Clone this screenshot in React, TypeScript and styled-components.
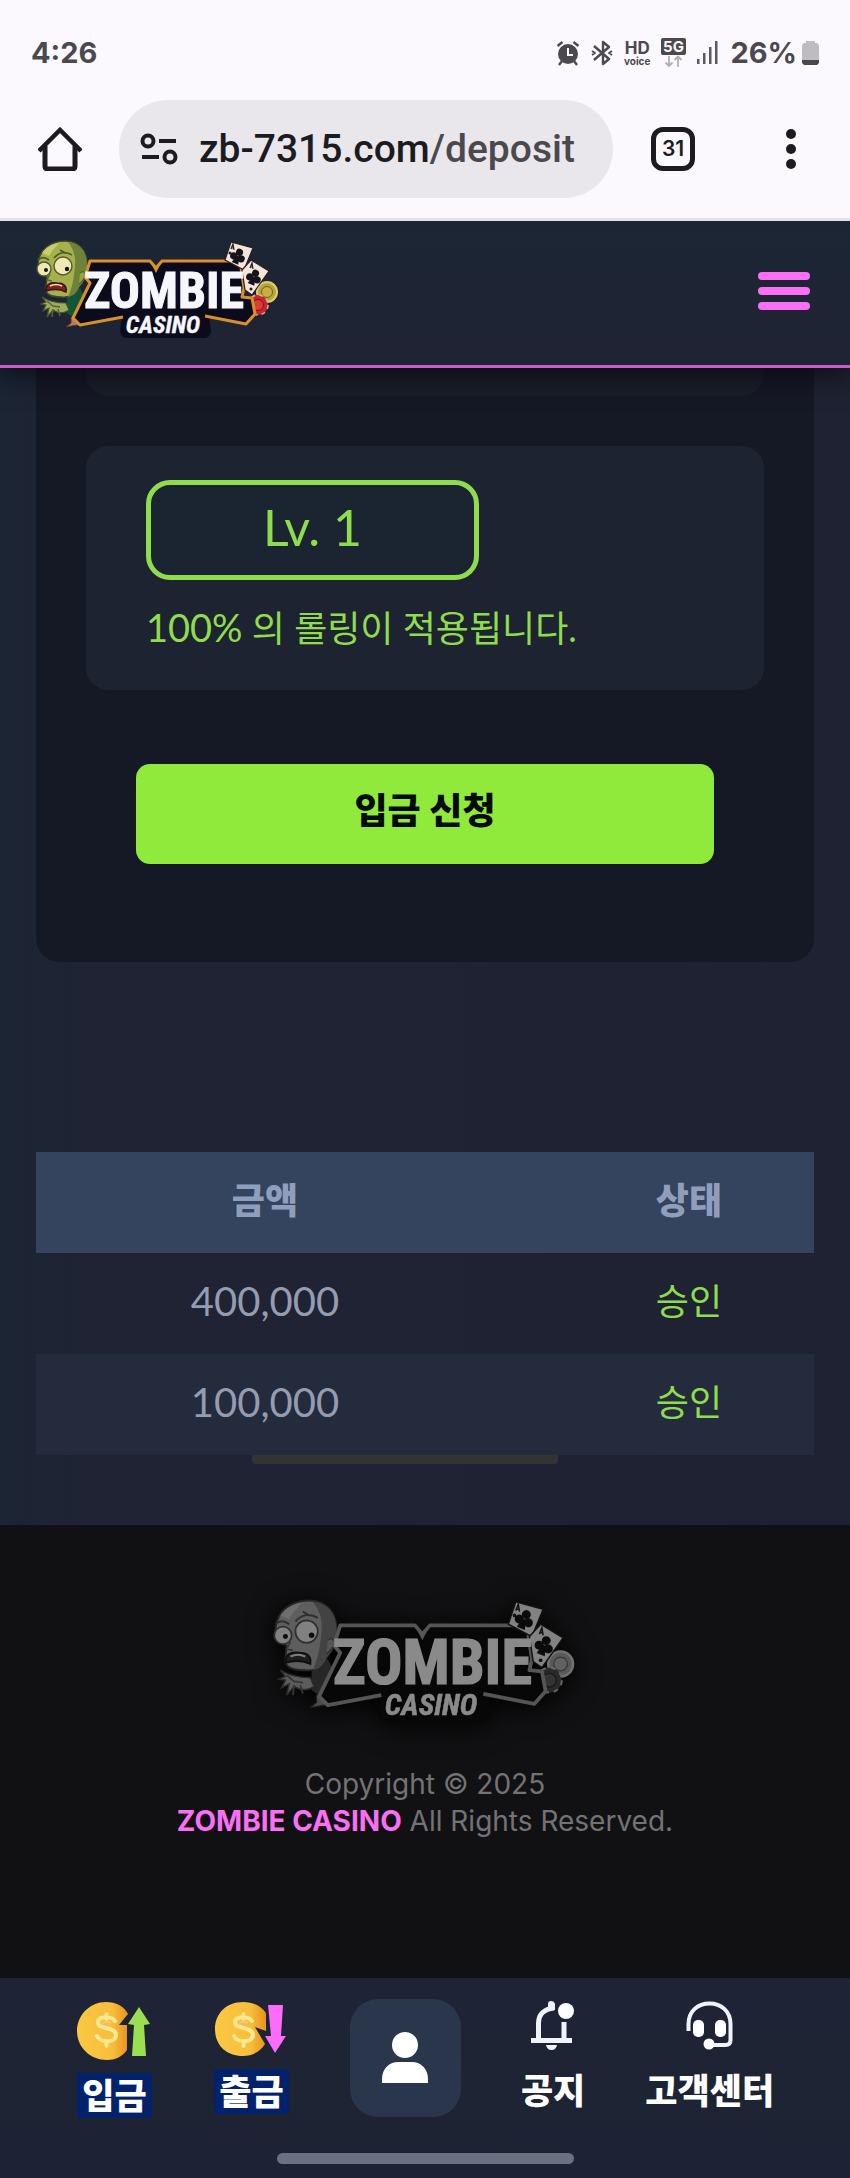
import React from "react";
import styled, { createGlobalStyle, css } from "styled-components";

const GlobalStyle = createGlobalStyle`
  *, *::before, *::after { box-sizing: border-box; }
  body {
    margin: 0;
    background: #1e2333;
    font-family: Lato, "Noto Sans CJK KR", sans-serif;
    -webkit-font-smoothing: antialiased;
  }
  button { border: 0; margin: 0; padding: 0; background: none; color: inherit; font: inherit; cursor: pointer; }
  a { color: inherit; text-decoration: none; }
  svg { display: block; flex: none; }
`;

const lime = "#8fdc4c";
const pink = "#fb6ff5";

/* ---------- phone and browser bars ---------- */

const BrowserChrome = styled.div`
  position: relative;
  z-index: 2;
  background: #fbf9fd;
  border-bottom: 3px solid #e4e2e9;
  font-family: Inter, sans-serif;
`;

const StatusBar = styled.div`
  display: flex;
  align-items: center;
  justify-content: space-between;
  padding: 33px 31px 0;
  color: #4b494d;
  font-size: 29px;
  font-weight: 700;
  line-height: 40px;
`;

const StatusIcons = styled.div`
  display: flex;
  align-items: center;
  gap: 11px;
`;

const HdVoice = styled.span`
  display: flex;
  flex-direction: column;
  align-items: center;
  font-size: 17px;
  line-height: 15px;
  small { font-size: 10px; line-height: 10px; }
`;

const Battery = styled.span`
  display: flex;
  align-items: center;
  gap: 5px;
`;

const Toolbar = styled.div`
  display: flex;
  align-items: center;
  padding: 27px 54px 20px 38px;
  color: #1c1b1f;
`;

const AddressBar = styled.button`
  display: flex;
  flex: 1;
  align-items: center;
  gap: 21px;
  min-width: 0;
  margin: 0 38px 0 37px;
  padding: 0 21px;
  border-radius: 49px;
  background: #e9e7eb;
  font-family: Roboto, sans-serif;
  font-size: 39px;
  font-weight: 500;
  line-height: 98px;
  white-space: nowrap;
`;

const UrlPath = styled.span`
  color: #4b494e;
`;

const TabCount = styled.button`
  width: 44px;
  height: 44px;
  margin-right: 91px;
  border: 5px solid #1c1b1f;
  border-radius: 12px;
  font-size: 21px;
  font-weight: 600;
  line-height: 34px;
`;

/* ---------- site header ---------- */

const SiteHeader = styled.header`
  position: relative;
  display: flex;
  align-items: center;
  justify-content: space-between;
  padding: 18px 40px 22px 36px;
  border-bottom: 3px solid #c45fcb;
  background: linear-gradient(180deg, #1b2634, #202334);
  box-shadow: 0 6px 26px rgba(5, 5, 12, 0.75);
`;

const MenuButton = styled.button`
  display: flex;
  flex-direction: column;
  gap: 7px;
  width: 52px;
`;

const MenuBar = styled.span`
  height: 8px;
  border-radius: 4px;
  background: ${pink};
`;

/* ---------- deposit form ---------- */

const Main = styled.main`
  padding: 0 36px 61px;
  background: linear-gradient(90deg, #1b2534, #1f2333 10%, #1f2232);
`;

const Panel = styled.section`
  padding: 0 50px 98px;
  border-radius: 0 0 24px 24px;
  background: #151825;
`;

const PreviousCard = styled.div`
  height: 28px;
  border-radius: 0 0 22px 22px;
  background: #191e29;
`;

const BonusCard = styled.div`
  margin-top: 50px;
  padding: 34px 60px 38px;
  border-radius: 22px;
  background: #1e2332;
  color: ${lime};
`;

const LevelBox = styled.div`
  max-width: 333px;
  padding-bottom: 6px;
  border: 5px solid ${lime};
  border-radius: 24px;
  background: #1b2531;
  font-size: 50px;
  line-height: 84px;
  text-align: center;
`;

const RollingNote = styled.p`
  margin: 24px 0 0;
  font-size: 36px;
  line-height: 48px;
`;

const RollingRate = styled.span`
  font-size: 38px;
  line-height: 1;
`;

const SubmitRow = styled.div`
  margin-top: 74px;
  padding: 0 50px;
`;

const SubmitButton = styled.button`
  width: 100%;
  padding: 22px 0 30px;
  border-radius: 14px;
  background: #8fea3b;
  color: #060a05;
  font-size: 36px;
  font-weight: 900;
  line-height: 48px;
`;

/* ---------- history table ---------- */

const TableScroller = styled.div`
  margin-top: 190px;
  overflow: hidden;
`;

const HistoryTable = styled.table`
  width: 109%;
  border-collapse: collapse;
  table-layout: fixed;
  color: #949cb1;
  font-size: 36px;
  line-height: 49px;
  text-align: center;
  tbody tr:nth-child(even) { background: #242b3d; }
`;

const HeadCell = styled.th<{ $width: string }>`
  width: ${(p) => p.$width};
  padding: 24px 0 28px;
  background: #34445e;
  color: #8f9ebb;
  font-weight: 900;
`;

const Cell = styled.td<{ $approved?: boolean }>`
  padding: 24px 0 28px;
  ${(p) => (p.$approved ? css`color: ${lime};` : css`font-size: 40px;`)}
`;

const ScrollThumb = styled.div`
  width: 306px;
  height: 9px;
  margin-left: 216px;
  border-radius: 0 0 4px 4px;
  background: #343334;
`;

/* ---------- footer ---------- */

const SiteFooter = styled.footer`
  display: flex;
  flex-direction: column;
  align-items: center;
  padding: 73px 36px 138px;
  background: #111113;
`;

const FadedLogo = styled.div`
  filter: grayscale(1) brightness(0.56) drop-shadow(0 4px 14px #000);
`;

const Copyright = styled.p`
  margin: 39px 0 0;
  color: #737376;
  font-family: Inter, sans-serif;
  font-size: 28px;
  line-height: 37px;
  text-align: center;
  strong { color: ${pink}; font-weight: 700; }
`;

/* ---------- bottom navigation ---------- */

const BottomNav = styled.nav`
  background: linear-gradient(180deg, #1f2336, #1d2433 60%, #1e2235);
  padding-bottom: 13px;
`;

const NavItems = styled.div`
  display: flex;
  align-items: flex-start;
  justify-content: center;
  gap: 60px;
  min-height: 154px;
  padding: 21px 20px 0;
`;

const NavLink = styled.a<{ $gap: number; $wide?: boolean }>`
  display: flex;
  flex-direction: column;
  align-items: center;
  gap: ${(p) => p.$gap}px;
  min-width: ${(p) => (p.$wide ? "77px" : "0")};
  margin-top: 2px;
  color: #fff;
  font-size: 35px;
  font-weight: 900;
  line-height: 45px;
  white-space: nowrap;
`;

const Highlight = styled.span`
  padding: 0 5px;
  background: #02236c;
`;

const ProfileButton = styled.button`
  display: flex;
  align-items: center;
  justify-content: center;
  width: 111px;
  height: 118px;
  border-radius: 28px;
  background: #2a364c;
`;

const GestureBar = styled.div`
  width: 297px;
  height: 11px;
  margin: 21px auto 0;
  border-radius: 6px;
  background: #6c7080;
`;

/* ---------- drawings ---------- */

const Club = ({ x, y }: { x: number; y: number }) => (
  <g transform={`translate(${x} ${y}) rotate(22)`} fill="#17131a">
    <circle cx="0" cy="-4" r="3.6" />
    <circle cx="-4" cy="1.5" r="3.6" />
    <circle cx="4" cy="1.5" r="3.6" />
    <path d="M-1.5 0h3l2 8h-7z" />
  </g>
);

const Logo = ({ width }: { width: number }) => (
  <svg width={width} viewBox="0 0 245 104" role="img" aria-label="Zombie Casino">
    <circle cx="231" cy="53" r="10" fill="#b5a441" stroke="#e2cf6c" strokeWidth="2" />
    <circle cx="231" cy="53" r="5.5" fill="#c9b13d" stroke="#6d6226" />
    <circle cx="222" cy="66" r="10" fill="#c5272b" stroke="#e9a6a0" strokeWidth="1.6" strokeDasharray="4 4" />
    <circle cx="222" cy="66" r="5.5" fill="#df3b36" stroke="#7b1518" />
    <path d="M31 58l13-9 5 10-11 20-7-5z" fill="#12563a" />
    <path d="M35 78l7 4 5 3-17 3 5-4z" fill="#b97b65" stroke="#59312a" />
    <path d="M6 58c6 4 14 6 24 6l3 7c-7 5-13 2-16 0l-6 7 2-9-6 3 3-6-5-1 5-2z" fill="#a0ad58" stroke="#46542c" strokeWidth="1.2" />
    <path d="M11 62l6 5 7 1M17 70l-1 8M22 70l2 7" fill="none" stroke="#56653a" strokeWidth="1.5" />
    <path d="M2 25C3 10 15 2 29 2c14 0 22 10 22 23 0 12-3 17-8 23-3 8-9 11-18 10-10 0-16-3-15-9l1-11C5 36 2 32 2 25z" fill="#a5b14c" stroke="#3c4828" strokeWidth="1.5" />
    <path d="M32 3c13 1 19 11 19 22 0 12-3 17-8 23-2 6-6 9-11 10 5-11 6-21 7-31 1-10-2-18-7-24z" fill="#6f813a" />
    <path d="M6 14C10 8 16 5 23 4c-3 4-7 7-10 13" fill="#c8cd70" />
    <path d="M44 34c5-4 6 2 3 7l-4 4" fill="#94a346" stroke="#46522a" />
    <path d="M2 21c3-3 7-3 11 0M18 19c5-6 12-7 18-3M24 11l5 3" fill="none" stroke="#4d5a2b" strokeWidth="1.6" />
    <circle cx="8" cy="30" r="7" fill="#efe9b5" stroke="#515b2c" strokeWidth="1.4" />
    <circle cx="27" cy="27" r="9" fill="#efe9b5" stroke="#515b2c" strokeWidth="1.4" />
    <circle cx="10" cy="31" r="2" fill="#17130f" />
    <circle cx="31" cy="30" r="2.2" fill="#17130f" />
    <path d="M14 35l-3 6 5 1" fill="none" stroke="#586631" strokeWidth="1.4" />
    <path d="M10 52c0-7 4-9 11-8 7 0 10 3 9 9-6-3-13-3-20-1z" fill="#8a1e1d" stroke="#341510" strokeWidth="1.5" />
    <path d="M14 47c4-2 8-2 12 0" stroke="#eee3b9" strokeWidth="1.6" fill="none" />
    <path
      d="M55 22H114l6 7 6-7h78l4 27-2 9 10 1 3 16-9 10-37-7 2 14q-1 7-6 7H90q-5 0-6-7l2-14-42 8-7-7 17-35-5-6z"
      fill="#0b0b1b"
    />
    <path
      d="M87 78l-43 8-7-7 17-35-5-6 5-16h60l6 7 6-7h78l4 27-2 9 10 1 3 16-9 10-41-8"
      fill="none"
      stroke="#d9902b"
      strokeWidth="3"
      strokeLinejoin="round"
    />
    <path d="M114 22l6 12 6-12-6 7z" fill="#d9902b" />
    <path d="M195 3l22 6-9 22-19-10z" fill="#f3e5dc" stroke="#2a1c1e" strokeWidth="1.2" />
    <path d="M215 21l18 11-17 24-7-5-3-20z" fill="#f3e5dc" stroke="#2a1c1e" strokeWidth="1.2" />
    <Club x={202} y={17} />
    <Club x={218} y={38} />
    <path d="M195 10l2-5 1 6m-3-2h3M214 29l2-5 1 6m-3-2h3" fill="none" stroke="#251b20" strokeWidth="1.2" />
    <circle cx="194" cy="14" r="1.5" fill="#251b20" />
    <circle cx="215" cy="50" r="1.5" fill="#251b20" />
    <g fill="#f6f6fd" stroke="#f6f6fd" textAnchor="middle" fontFamily="'Roboto Condensed', Roboto, sans-serif" fontWeight="700">
      <text x="128" y="69" fontSize="50" strokeWidth="1">ZOMBIE</text>
      <text x="127" y="94" fontSize="24" strokeWidth="0.4" fontStyle="italic">CASINO</text>
    </g>
  </svg>
);

const Coin = ({ up }: { up?: boolean }) => (
  <svg width="74" height={up ? 60 : 56} viewBox={up ? "0 0 74 60" : "0 0 74 56"} aria-hidden="true">
    <defs>
      <linearGradient id={up ? "coinUp" : "coinDown"} x1="0" x2="1">
        <stop offset="0" stopColor="#fac843" />
        <stop offset=".7" stopColor="#f8bd3c" />
        <stop offset="1" stopColor="#e8921e" />
      </linearGradient>
    </defs>
    {up ? (
      <path d="M29 1c10 0 18 4 22 12l-9 11h8v25c-5 7-12 10-20 10C13 59 0 46 0 30S13 1 29 1z" fill="url(#coinUp)" />
    ) : (
      <path d="M29 1c10 0 18 4 23 11v18l-11-4 10 17c-5 8-13 12-22 12C12 55 1 44 1 28S13 1 29 1z" fill="url(#coinDown)" />
    )}
    <path d="M38 20c-2-4-16-6-17 1-1 8 18 4 18 13 0 8-16 8-19 1M29.500 13v5M29.500 40v5" fill="none" stroke="#fde88d" strokeWidth="4" strokeLinecap="round" />
    <path d="M34 22c-4-2-9-1-9 2" fill="none" stroke="#f8c19a" strokeWidth="1.500" />
    {up ? (
      <path d="M62 6L73 23l-6 1 2 31H55l2-31-6-1z" fill="#99df51" />
    ) : (
      <path d="M54 4h15l-2 31h5L61 52 51 35h6z" fill="#fb6cf8" />
    )}
  </svg>
);

const AlarmIcon = () => (
  <svg width="24" height="26" viewBox="0 0 24 26" aria-hidden="true">
    <circle cx="12" cy="14" r="10" fill="#4b494d" />
    <path d="M1.500 6l5-4M22.500 6l-5-4M6 21l-3 4M18 21l3 4" stroke="#4b494d" strokeWidth="2.400" />
    <path d="M12 8v7h5" fill="none" stroke="#fbf9fd" strokeWidth="2" />
  </svg>
);

const BluetoothIcon = () => (
  <svg width="22" height="26" viewBox="0 0 22 26" fill="none" stroke="#4b494d" strokeWidth="2.400" strokeLinejoin="round" aria-hidden="true">
    <path d="M3 6l15 13-6 5V2l6 5L3 20" />
    <path d="M1 11l3 2-3 2M21 11l-3 2 3 2" strokeWidth="1.800" />
  </svg>
);

const FiveGIcon = () => (
  <svg width="25" height="30" viewBox="0 0 25 30" aria-label="5G" role="img">
    <rect width="25" height="17" rx="2" fill="#4b494d" />
    <text x="12.500" y="14" textAnchor="middle" fontFamily="Inter, sans-serif" fontWeight="700" fontSize="15" fill="#fbf9fd">5G</text>
    <path d="M8 18v10M4.500 24.500L8 28l3.500-3.500M17 29V18.500M13.500 22l3.500-3.500 3.500 3.500" fill="none" stroke="#b1afb3" strokeWidth="1.800" />
  </svg>
);

const SignalIcon = () => (
  <svg width="22" height="24" viewBox="0 0 22 24" fill="#5c5a5e" aria-hidden="true">
    <rect x="0" y="18" width="2.500" height="5" />
    <rect x="6" y="12" width="2.500" height="11" />
    <rect x="12" y="6" width="2.500" height="17" />
    <rect x="18" y="0" width="2.500" height="23" />
  </svg>
);

const BatteryIcon = () => (
  <svg width="17" height="26" viewBox="0 0 17 26" aria-hidden="true">
    <path d="M4 1h9v2h2l2 2v17H0V5l2-2h2z" fill="#bebcc0" />
    <path d="M0 20h17v3l-2 2H2l-2-2z" fill="#4b494d" />
  </svg>
);

const history = [
  { amount: "400,000", status: "승인" },
  { amount: "100,000", status: "승인" },
];

export default function App() {
  return (
    <>
      <GlobalStyle />
      <BrowserChrome>
        <StatusBar>
          <span>4:26</span>
          <StatusIcons>
            <AlarmIcon />
            <BluetoothIcon />
            <HdVoice>HD<small>voice</small></HdVoice>
            <FiveGIcon />
            <SignalIcon />
            <Battery>26%<BatteryIcon /></Battery>
          </StatusIcons>
        </StatusBar>
        <Toolbar>
          <button aria-label="Home">
            <svg width="44" height="44" viewBox="0 0 44 44" fill="none" stroke="currentColor" strokeWidth="5">
              <path d="M1 24L22 3l21 21" strokeWidth="4.500" />
              <path d="M7 19v20q0 3 3 3h24q3 0 3-3V19" />
            </svg>
          </button>
          <AddressBar>
            <svg width="38" height="32" viewBox="0 0 38 32" fill="none" stroke="currentColor" strokeWidth="4" aria-hidden="true">
              <circle cx="8" cy="8" r="5.500" />
              <circle cx="30" cy="24" r="5.500" />
              <path d="M19 8h17M2 24h17" />
            </svg>
            <span>zb-7315.com<UrlPath>/deposit</UrlPath></span>
          </AddressBar>
          <TabCount aria-label="31 open tabs">31</TabCount>
          <button aria-label="More options">
            <svg width="10" height="42" viewBox="0 0 10 42" fill="currentColor">
              <circle cx="5" cy="6" r="5" />
              <circle cx="5" cy="21" r="5" />
              <circle cx="5" cy="36" r="5" />
            </svg>
          </button>
        </Toolbar>
      </BrowserChrome>

      <SiteHeader>
        <a href="#home"><Logo width={245} /></a>
        <MenuButton aria-label="Menu">
          <MenuBar />
          <MenuBar />
          <MenuBar />
        </MenuButton>
      </SiteHeader>

      <Main>
        <Panel>
          <PreviousCard />
          <BonusCard>
            <LevelBox>Lv. 1</LevelBox>
            <RollingNote><RollingRate>100%</RollingRate> 의 롤링이 적용됩니다.</RollingNote>
          </BonusCard>
          <SubmitRow>
            <SubmitButton>입금 신청</SubmitButton>
          </SubmitRow>
        </Panel>

        <TableScroller>
          <HistoryTable>
            <thead>
              <tr>
                <HeadCell $width="54%">금액</HeadCell>
                <HeadCell $width="46%">상태</HeadCell>
              </tr>
            </thead>
            <tbody>
              {history.map((row) => (
                <tr key={row.amount}>
                  <Cell>{row.amount}</Cell>
                  <Cell $approved>{row.status}</Cell>
                </tr>
              ))}
            </tbody>
          </HistoryTable>
          <ScrollThumb />
        </TableScroller>
      </Main>

      <SiteFooter>
        <FadedLogo><Logo width={305} /></FadedLogo>
        <Copyright>
          Copyright © 2025<br />
          <strong>ZOMBIE CASINO</strong> All Rights Reserved.
        </Copyright>
      </SiteFooter>

      <BottomNav>
        <NavItems>
          <NavLink href="#deposit" $gap={12} $wide>
            <Coin up />
            <Highlight>입금</Highlight>
          </NavLink>
          <NavLink href="#withdraw" $gap={12} $wide>
            <Coin />
            <Highlight>출금</Highlight>
          </NavLink>
          <ProfileButton aria-label="My page">
            <svg width="46" height="52" viewBox="0 0 46 52" fill="#fff">
              <circle cx="23" cy="13" r="13" />
              <path d="M0 51v-4c0-11 8-17 16-17h14c8 0 16 6 16 17v4z" />
            </svg>
          </ProfileButton>
          <NavLink href="#notice" $gap={18}>
            <svg width="44" height="49" viewBox="0 0 44 49" fill="none" stroke="#f1f3fb" strokeWidth="5" aria-hidden="true">
              <path d="M0 39.500h41M7.500 39V22C7.500 14 13 8 23 7M33 21v18" />
              <path d="M17 8V3q0-3 3-3t4 3v6z" fill="#f1f3fb" stroke="none" />
              <circle cx="35" cy="10" r="8" fill="#fff" stroke="none" />
              <path d="M15 44h11q-1 5-5.500 5T15 44z" fill="#f1f3fb" stroke="none" />
            </svg>
            공지
          </NavLink>
          <NavLink href="#support" $gap={18}>
            <svg width="47" height="49" viewBox="0 0 47 49" fill="none" stroke="#f1f3fb" strokeWidth="4" aria-hidden="true">
              <path d="M2.500 30v-7C2.500 10 12 2.500 23.500 2.500S44.500 10 44.500 23v16q0 5-5 5H24" />
              <rect x="7" y="19" width="11" height="17" rx="5" fill="#fff" stroke="none" />
              <rect x="29" y="19" width="11" height="17" rx="5" fill="#fff" stroke="none" />
              <circle cx="23" cy="43" r="5.500" fill="#fff" stroke="none" />
            </svg>
            고객센터
          </NavLink>
        </NavItems>
        <GestureBar />
      </BottomNav>
    </>
  );
}
